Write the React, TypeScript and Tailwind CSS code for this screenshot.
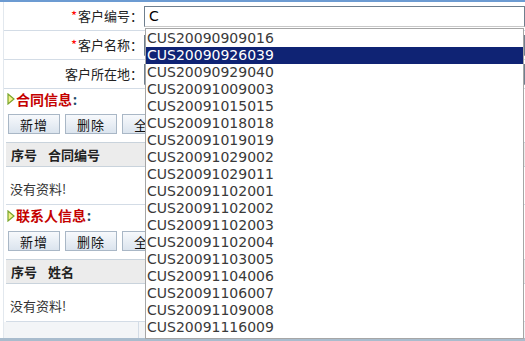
const codes = [
  "CUS20090909016",
  "CUS20090926039",
  "CUS20090929040",
  "CUS20091009003",
  "CUS20091015015",
  "CUS20091018018",
  "CUS20091019019",
  "CUS20091029002",
  "CUS20091029011",
  "CUS20091102001",
  "CUS20091102002",
  "CUS20091102003",
  "CUS20091102004",
  "CUS20091103005",
  "CUS20091104006",
  "CUS20091106007",
  "CUS20091109008",
  "CUS20091116009",
];

const cjk = "font-['SimSun','Noto_Sans_CJK_SC',sans-serif]";

function FormRow({ label, required, value }: { label: string; required?: boolean; value?: string }) {
  return (
    <div className="flex h-[29px] border-b border-[#d3dce6]">
      <div className={`w-[140px] flex items-center justify-end pr-[1px] text-[13px] text-[#222] ${cjk}`}>
        {required && <span className="text-[#f00] mr-[1px]">*</span>}
        {label}：
      </div>
      <div className="flex-1 flex items-center">
        <div className="h-[21px] w-full border border-[#6f7f8e] border-b-[#c8c8c8] bg-white pl-[4px] flex items-center text-[14px] text-black font-['DejaVu_Sans',sans-serif]">
          {value}
        </div>
      </div>
    </div>
  );
}

function SectionTitle({ title, h }: { title: string; h: string }) {
  return (
    <div className={`flex items-center pl-[3px] ${h}`}>
      <svg width="8" height="12" viewBox="0 0 8 12" className="mr-[1px]">
        <path d="M1 1 L7 6 L1 11 Z" fill="#f4f28a" stroke="#7aa52c" strokeWidth="1.2" />
      </svg>
      <span className={`text-[14px] font-bold text-[#c40000] ${cjk}`}>{title}</span>
      <span className="text-[14px] font-bold text-[#1d4b6a] ml-[1px]">:</span>
    </div>
  );
}

function Buttons() {
  return (
    <div className="flex items-start gap-[5px] h-[33px] pl-[4px] pt-[5px]">
      {["新增", "删除", "全选"].map((t) => (
        <button
          key={t}
          className={`w-[52px] h-[20px] border border-[#a9b7c6] bg-gradient-to-b from-[#f7f9fc] to-[#dbe4ee] text-[13px] text-[#111] tracking-[1px] ${cjk}`}
        >
          {t}
        </button>
      ))}
    </div>
  );
}

function Grid({ col2 }: { col2: string }) {
  return (
    <div className="ml-[2px]">
      <div className={`flex items-center h-[25px] bg-[#ececec] border-y border-[#c9d3dc] text-[13px] font-bold text-[#222] ${cjk}`}>
        <span className="pl-[5px] w-[42px]">序号</span>
        <span>{col2}</span>
      </div>
      <div className={`flex items-end h-[38px] pb-[6px] pl-[4px] text-[13px] text-[#333] border-b border-[#d3dce6] ${cjk}`}>
        没有资料!
      </div>
    </div>
  );
}

export default function App() {
  return (
    <div className="relative w-[525px] h-[341px] overflow-hidden bg-white">
      <div className="h-[2px] bg-[#6c9bd2]" />
      <div className="ml-[3px] border-l border-[#e2e8ee]">
        <FormRow label="客户编号" required value="C" />
        <FormRow label="客户名称" required />
        <FormRow label="客户所在地" />
        <SectionTitle title="合同信息" h="h-[20px]" />
        <Buttons />
        <Grid col2="合同编号" />
        <SectionTitle title="联系人信息" h="h-[21px]" />
        <Buttons />
        <Grid col2="姓名" />
        <div className="flex h-[16px] bg-[#f3f5f7]">
          <div className="w-[135px] border-r border-[#d3dce6]" />
        </div>
      </div>
      <div className="absolute left-0 right-0 bottom-0 h-[3px] bg-[#a9bccd]" />

      {/* autocomplete dropdown */}
      <div className="absolute left-[145px] top-[28px] w-[379px] h-[311px] bg-white border border-[#a6a6a6] pt-[1px] font-['DejaVu_Sans',sans-serif] text-[14px]">
        {codes.map((c, i) => (
          <div
            key={c}
            className={`h-[17px] leading-[17px] pl-[1px] ${i === 1 ? "bg-[#0f2374] text-white" : "text-[#3a3a3a]"}`}
          >
            {c}
          </div>
        ))}
      </div>
    </div>
  );
}
